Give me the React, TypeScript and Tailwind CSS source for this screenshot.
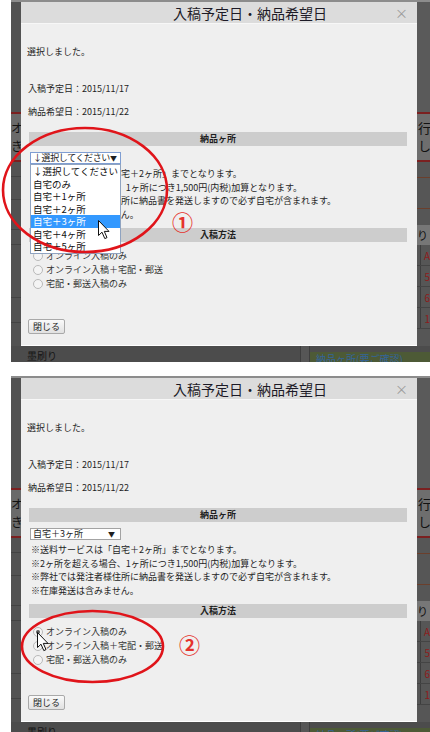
import React from "react";

const FONT = "font-['Noto_Sans_CJK_JP','Noto_Sans',sans-serif]";

const OPTIONS = [
  "↓選択してください",
  "自宅のみ",
  "自宅＋1ヶ所",
  "自宅＋2ヶ所",
  "自宅＋3ヶ所",
  "自宅＋4ヶ所",
  "自宅＋5ヶ所",
];

const NOTES = [
  "※送料サービスは「自宅＋2ヶ所」までとなります。",
  "※2ヶ所を超える場合、1ヶ所につき1,500円(内税)加算となります。",
  "※弊社では発注者様住所に納品書を発送しますので必ず自宅が含まれます。",
  "※在庫発送は含みません。",
];

const METHODS = ["オンライン入稿のみ", "オンライン入稿＋宅配・郵送", "宅配・郵送入稿のみ"];

function Radio({ checked }: { checked?: boolean }) {
  return (
    <span className="w-[10px] h-[10px] rounded-full border border-[#b9b9b9] bg-[#f4f4f4] flex items-center justify-center shrink-0">
      {checked && <span className="w-[4px] h-[4px] rounded-full bg-[#5c5c5c]" />}
    </span>
  );
}

function Cursor({ className }: { className: string }) {
  return (
    <svg className={className} width="13" height="20" viewBox="0 0 13 20">
      <path
        d="M0.5 0.5 L0.5 15.5 L4 12.2 L6.8 18.6 L9 17.6 L6.3 11.4 L11 11.4 Z"
        fill="#ffffff"
        stroke="#111111"
        strokeWidth="1"
        strokeLinejoin="round"
      />
    </svg>
  );
}

function Dialog({ open }: { open: boolean }) {
  return (
    <div className="w-[396px] h-[344px] bg-[#efefef] border-b border-white flex flex-col text-[#1e1e1e] shrink-0">
      <div className="h-[22px] shrink-0 bg-[#dcdcdc] border-b border-[#f7f7f7] flex items-center">
        <span className="ml-[152px] text-[14px] leading-[16px] text-[#1c1a26]">入稿予定日・納品希望日</span>
        <span className="ml-auto mr-[9px] text-[13px] leading-[13px] text-[#9a9a9a]">×</span>
      </div>
      <p className="mt-[22px] ml-[6px] text-[9px] leading-[12px]">選択しました。</p>
      <p className="mt-[25px] ml-[7px] text-[9px] leading-[12px]">入稿予定日：2015/11/17</p>
      <p className="mt-[11px] ml-[7px] text-[9px] leading-[12px]">納品希望日：2015/11/22</p>
      <div className="mt-[14px] ml-[8px] mr-[10px] h-[14px] bg-[#cdcdcd] text-center text-[9px] leading-[14px] font-bold">
        納品ヶ所
      </div>
      <div
        className={
          "relative mt-[6px] ml-[9px] w-[91px] h-[12px] bg-white border flex items-center pl-[2px] pr-[5px] text-[9px] leading-[10px] whitespace-nowrap " +
          (open ? "border-[#7f9ed2]" : "border-[#a3a3a3]")
        }
      >
        <span className={open ? "tracking-[-0.4px]" : ""}>{open ? "↓選択してください" : "自宅＋3ヶ所"}</span>
        <span className="ml-auto text-[7px] leading-[7px]">▼</span>
        {open && (
          <div className="absolute left-[-1px] top-[11px] w-[91px] bg-white border border-[#8fa3c0] flex flex-col z-10">
            {OPTIONS.map((o, i) => (
              <div
                key={o}
                className={
                  "h-[12.5px] pl-[2px] text-[9.5px] leading-[12.5px] whitespace-nowrap " +
                  (i === 4 ? "bg-[#3399ff] text-white" : "text-[#111]")
                }
              >
                {o}
              </div>
            ))}
          </div>
        )}
      </div>
      <div className="mt-[3px] ml-[10px] flex flex-col text-[9px] leading-[13.5px]">
        {NOTES.map((n) => (
          <p key={n} className="whitespace-nowrap">{n}</p>
        ))}
      </div>
      <div className="mt-[7px] ml-[8px] mr-[10px] h-[14px] bg-[#cdcdcd] text-center text-[9px] leading-[14px] font-bold">
        入稿方法
      </div>
      <div className="mt-[7px] ml-[12px] flex flex-col">
        {METHODS.map((m, i) => (
          <div key={m} className="h-[14px] flex items-center gap-[3px] text-[9px] text-[#333]">
            <Radio checked={!open && i === 0} />
            <span>{m}</span>
          </div>
        ))}
      </div>
      <div className="mt-[28px] ml-[7px] w-[37px] h-[15px] rounded-[2px] border border-[#a9a9a9] bg-gradient-to-b from-[#fafafa] to-[#e1e1e1] flex items-center justify-center text-[9px] leading-[10px]">
        閉じる
      </div>
    </div>
  );
}

function LeftStrip() {
  const cells = [15, 23, 30, 15, 53, 25];
  return (
    <div className="w-[10px] h-[344px] flex flex-col overflow-hidden bg-[#525252] shrink-0">
      <div className="h-[110px] shrink-0" />
      <div className="h-[2px] bg-[#7b2020] shrink-0" />
      <div className="h-[46px] shrink-0 bg-[#6a6a6a] pt-[5px] text-[12px] leading-[18px] text-[#111] overflow-hidden">
        <p>オ</p>
        <p>き</p>
      </div>
      <div className="h-[2px] bg-[#7b2020] shrink-0" />
      {cells.map((h, i) => (
        <div key={i} style={{ height: h }} className="shrink-0 border-b border-[#424242]" />
      ))}
    </div>
  );
}

function RightStrip() {
  const letters = ["A", "5", "6", "1"];
  return (
    <div className="w-[13px] h-[344px] flex flex-col overflow-hidden bg-[#565656] shrink-0">
      <div className="h-[110px] shrink-0 bg-[#5a5a5a]" />
      <div className="h-[2px] bg-[#7b2020] shrink-0" />
      <div className="h-[46px] shrink-0 bg-[#6e6e6e] pt-[5px] pl-[1px] text-[13px] leading-[18px] text-[#111] overflow-hidden">
        <p>行</p>
        <p>し</p>
      </div>
      <div className="h-[2px] bg-[#7b2020] shrink-0" />
      <div className="h-[16px] shrink-0 border-b border-[#6b3f2c]" />
      <div className="h-[31px] shrink-0 border-b border-[#6b3f2c]" />
      <div className="h-[16px] shrink-0" />
      <div className="h-[20px] shrink-0 bg-[#777777] text-[11px] leading-[20px] text-[#111] overflow-hidden">り</div>
      {letters.map((l) => (
        <div key={l} className="h-[21px] shrink-0 flex border-b border-[#444]">
          <div className="w-[6px] border-r border-[#3d3d3d]" />
          <span className="pl-[3px] text-[10px] leading-[21px] text-[#8e1c1c]">{l}</span>
        </div>
      ))}
    </div>
  );
}

function BottomStrip({ h }: { h: number }) {
  return (
    <div style={{ height: h }} className="flex overflow-hidden bg-[#4c4c4c] shrink-0">
      <div className="w-[289px] shrink-0 pl-[16px] pt-[3px] text-[10px] leading-[14px] text-[#151515]">墨刷り</div>
      <div className="w-[10px] shrink-0 bg-[#565656] border-x border-[#3e3e3e]" />
      <div className="flex-1 mt-[6px] bg-[#4d5a36] pl-[6px] text-[10px] leading-[14px] text-[#34649a] overflow-hidden whitespace-nowrap">
        納品ヶ所(要ご確認)
      </div>
    </div>
  );
}

function Frame({ open, bottom }: { open: boolean; bottom: number }) {
  return (
    <div className="relative flex shrink-0" style={{ height: 346 + bottom }}>
      <div className="w-[11px] bg-white shrink-0" />
      <div className="flex-1 flex flex-col bg-[#4f4f4f] overflow-hidden">
        <div className="h-[2px] bg-[#8c8c8c] shrink-0" />
        <div className="flex shrink-0">
          <LeftStrip />
          <Dialog open={open} />
          <RightStrip />
        </div>
        <BottomStrip h={bottom} />
      </div>
      {open ? (
        <>
          <svg className="absolute left-0 top-0 pointer-events-none z-20" width="430" height="362" viewBox="0 0 430 362">
            <ellipse cx="85" cy="190" rx="82" ry="62" fill="none" stroke="#e0141a" strokeWidth="2.6" />
          </svg>
          <span className={"absolute left-[172px] top-[209px] z-20 text-[21px] leading-[24px] font-bold text-[#e5322d] " + FONT}>
            ①
          </span>
          <Cursor className="absolute left-[98px] top-[220px] z-30" />
        </>
      ) : (
        <>
          <svg className="absolute left-0 top-0 pointer-events-none z-20" width="430" height="356" viewBox="0 0 430 356">
            <ellipse cx="92.5" cy="270.5" rx="70.5" ry="35.5" fill="none" stroke="#e0141a" strokeWidth="2.6" />
          </svg>
          <span className={"absolute left-[179px] top-[256px] z-20 text-[21px] leading-[24px] font-bold text-[#e5322d] " + FONT}>
            ②
          </span>
          <Cursor className="absolute left-[37px] top-[256px] z-30" />
        </>
      )}
    </div>
  );
}

export default function App() {
  return (
    <div className={"w-[430px] h-[732px] overflow-hidden bg-white flex flex-col " + FONT}>
      <Frame open={true} bottom={16} />
      <div className="h-[14px] shrink-0 bg-white" />
      <Frame open={false} bottom={10} />
    </div>
  );
}
